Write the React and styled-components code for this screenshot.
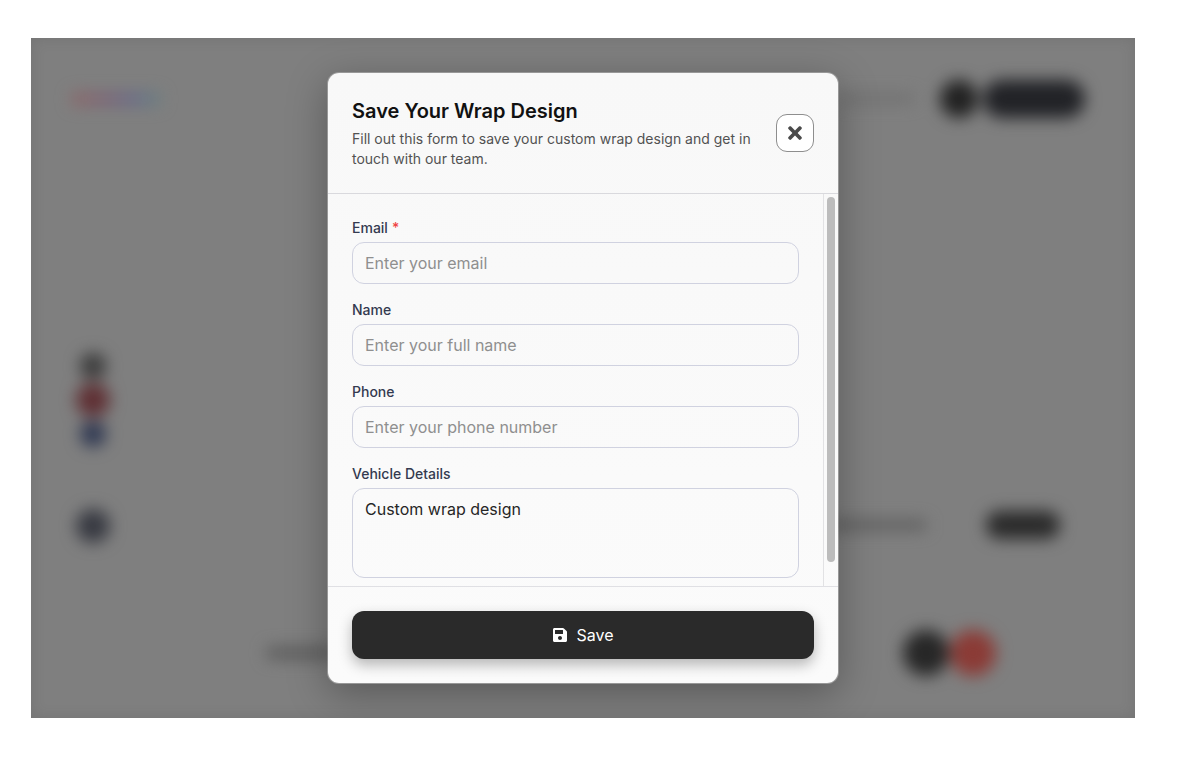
import React from "react"
import styled, { createGlobalStyle } from "styled-components"
import { FaSave, FaTimes } from "react-icons/fa"

const fields = [
  { label: "Email", placeholder: "Enter your email", type: "email", required: true },
  { label: "Name", placeholder: "Enter your full name", type: "text" },
  { label: "Phone", placeholder: "Enter your phone number", type: "tel" },
]

const App = () => {
  return (
    <>
      <GlobalStyle />
      <Frame>
        <Backdrop aria-hidden="true">
          <TopBar>
            <Logo />
            <NavText />
            <Dot $size={38} $color="#222222" />
            <TopPill />
          </TopBar>
          <Stage>
            <ToolRail>
              <Swatches>
                <Dot $size={26} $color="#3a3a3a" />
                <Dot $size={34} $color="#5f3034" />
                <Dot $size={26} $color="#2f3852" />
              </Swatches>
              <Dot $size={34} $color="#383a42" />
            </ToolRail>
            <SummaryRow>
              <SummaryText />
              <SummaryPill />
            </SummaryRow>
          </Stage>
          <BottomBar>
            <BottomText />
            <BottomDots>
              <Dot $size={46} $color="#272727" />
              <Dot $size={46} $color="#8b3b36" />
            </BottomDots>
          </BottomBar>
        </Backdrop>

        <Overlay>
          <Modal>
            <Header>
              <HeaderText>
                <Title>Save Your Wrap Design</Title>
                <Description>
                  Fill out this form to save your custom wrap design and get in touch with our team.
                </Description>
              </HeaderText>
              <CloseButton type="button" aria-label="Close">
                <FaTimes />
              </CloseButton>
            </Header>

            <BodyRow>
              <Body>
                {fields.map((field) => (
                  <Field key={field.label}>
                    <Label>
                      {field.label}
                      {field.required && <Required>*</Required>}
                    </Label>
                    <Input type={field.type} placeholder={field.placeholder} />
                  </Field>
                ))}
                <Field>
                  <Label>Vehicle Details</Label>
                  <TextArea defaultValue="Custom wrap design" />
                </Field>
              </Body>
              <ScrollTrack>
                <ScrollThumb />
              </ScrollTrack>
            </BodyRow>

            <Footer>
              <SaveButton type="button">
                <FaSave />
                Save
              </SaveButton>
            </Footer>
          </Modal>
        </Overlay>
      </Frame>
    </>
  )
}

export default App

const GlobalStyle = createGlobalStyle`
  html, body {
    margin: 0;
    background: #ffffff;
  }
  body {
    font-family: Inter, "Liberation Sans", sans-serif;
  }
  * {
    box-sizing: border-box;
  }
`

const Frame = styled.div`
  position: relative;
  width: 1104px;
  height: 680px;
  margin: 38px 0 40px 31px;
  overflow: hidden;
  background: #7f7f7f;
  box-shadow: inset 0 0 14px rgba(60, 60, 60, 0.18);
`

const Backdrop = styled.div`
  height: 100%;
  display: flex;
  flex-direction: column;
  padding: 42px 50px 42px 41px;
  filter: blur(8px);
`

const TopBar = styled.div`
  display: flex;
  align-items: center;
  height: 37px;
`

const Logo = styled.div`
  width: 88px;
  height: 12px;
  background: linear-gradient(90deg, #8f6666, #7c6478 40%, #686a8a 70%, #678282);
`

const NavText = styled.div`
  width: 76px;
  height: 9px;
  margin-left: auto;
  margin-right: 26px;
  background: #707070;
`

const Dot = styled.div`
  flex: none;
  width: ${(props) => props.$size}px;
  height: ${(props) => props.$size}px;
  border-radius: 50%;
  background: ${(props) => props.$color};
`

const TopPill = styled.div`
  width: 102px;
  height: 38px;
  margin-left: 5px;
  border-radius: 19px;
  background: #222327;
`

const Stage = styled.div`
  flex: 1;
  display: flex;
  justify-content: space-between;
  align-items: flex-start;
`

const ToolRail = styled.div`
  width: 42px;
  display: flex;
  flex-direction: column;
  align-items: center;
  gap: 62px;
  padding-top: 236px;
`

const Swatches = styled.div`
  display: flex;
  flex-direction: column;
  align-items: center;
  gap: 4px;
`

const SummaryRow = styled.div`
  display: flex;
  align-items: center;
  margin: 394px 25px 0 0;
`

const SummaryText = styled.div`
  width: 96px;
  height: 10px;
  margin-right: 60px;
  background: #5e5e5e;
`

const SummaryPill = styled.div`
  width: 74px;
  height: 28px;
  border-radius: 14px;
  background: #2b2b2b;
`

const BottomBar = styled.div`
  display: flex;
  align-items: center;
  justify-content: space-between;
  padding: 0 89px 0 195px;
`

const BottomText = styled.div`
  width: 66px;
  height: 12px;
  background: #5c5c5c;
`

const BottomDots = styled.div`
  display: flex;
  gap: 1px;
`

const Overlay = styled.div`
  position: absolute;
  inset: 0;
  display: flex;
  align-items: center;
  justify-content: center;
`

const Modal = styled.div`
  width: 512px;
  height: 612px;
  display: flex;
  flex-direction: column;
  overflow: hidden;
  border: 1px solid rgba(255, 255, 255, 0.2);
  border-radius: 12px;
  background: linear-gradient(180deg, #f8f8f8, #fbfbfb) padding-box;
  box-shadow: 0 10px 40px rgba(0, 0, 0, 0.3);
`

const Header = styled.div`
  display: flex;
  align-items: center;
  gap: 16px;
  padding: 24px;
  border-bottom: 1px solid #d9d9dd;
`

const HeaderText = styled.div`
  flex: 1;
`

const Title = styled.h2`
  margin: 0 0 4px;
  font-size: 20px;
  line-height: 28px;
  font-weight: 600;
  color: #111111;
`

const Description = styled.p`
  margin: 0;
  font-size: 14px;
  line-height: 20px;
  color: #525252;
`

const CloseButton = styled.button`
  flex: none;
  width: 38px;
  height: 38px;
  display: flex;
  align-items: center;
  justify-content: center;
  padding: 0;
  border: 1.5px solid #8e8e8e;
  border-radius: 11px;
  background: #ffffff;
  color: #4a4a4a;
  font-size: 20px;
`

const BodyRow = styled.div`
  flex: 1;
  min-height: 0;
  display: flex;
`

const Body = styled.div`
  flex: 1;
  min-width: 0;
  display: flex;
  flex-direction: column;
  gap: 16px;
  padding: 24px;
  overflow: hidden;
`

const ScrollTrack = styled.div`
  flex: none;
  width: 15px;
  padding: 3px;
  border-left: 1px solid #e2e2e4;
`

const ScrollThumb = styled.div`
  width: 8px;
  height: 365px;
  border-radius: 4px;
  background: #bcbcbc;
`

const Field = styled.div`
  flex: none;
  display: flex;
  flex-direction: column;
  gap: 4px;
`

const Label = styled.label`
  font-size: 14px;
  line-height: 20px;
  font-weight: 500;
  color: #343a50;
`

const Required = styled.span`
  margin-left: 4px;
  color: #ef4444;
`

const Input = styled.input`
  width: 100%;
  height: 42px;
  padding: 0 12px;
  border: 1px solid #d0d2e0;
  border-radius: 12px;
  background: transparent;
  font-family: inherit;
  font-size: 16px;
  color: #262626;
  outline: none;

  &::placeholder {
    color: #8f8f8f;
    opacity: 1;
  }
`

const TextArea = styled.textarea`
  display: block;
  width: 100%;
  height: 90px;
  padding: 8px 12px;
  border: 1px solid #d0d2e0;
  border-radius: 12px;
  background: transparent;
  font-family: inherit;
  font-size: 16px;
  line-height: 24px;
  color: #262626;
  outline: none;
  resize: none;
`

const Footer = styled.div`
  padding: 24px;
  border-top: 1px solid #e0e0e4;
`

const SaveButton = styled.button`
  width: 100%;
  height: 48px;
  display: flex;
  align-items: center;
  justify-content: center;
  gap: 8px;
  border: 0;
  border-radius: 12px;
  background: #2a2a2a;
  box-shadow: 0 6px 14px rgba(0, 0, 0, 0.28);
  font-family: inherit;
  font-size: 16px;
  font-weight: 400;
  color: #ffffff;
`
